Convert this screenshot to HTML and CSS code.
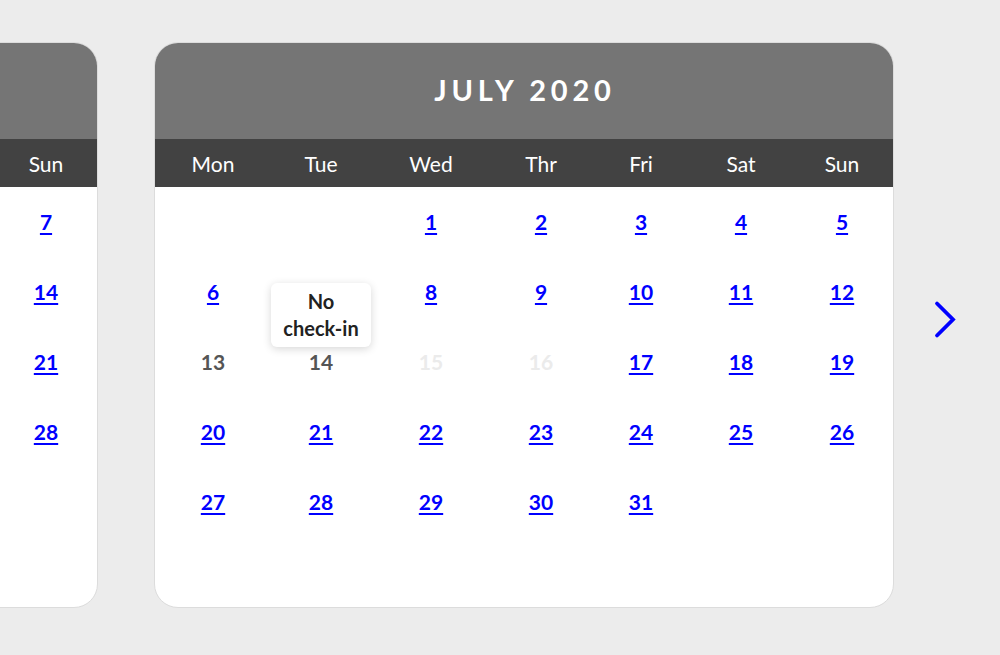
FILE: index.html
```html
<!DOCTYPE html>
<html lang="en">
<head>
<meta charset="utf-8">
<title>Calendar</title>
<link rel="stylesheet" href="styles.css">
</head>
<body>
<div class="stage">
  <section class="cal">
    <header class="cal-title">JUNE 2020</header>
    <div class="cal-weekdays">
      <span>Mon</span><span>Tue</span><span>Wed</span><span>Thr</span><span>Fri</span><span>Sat</span><span>Sun</span>
    </div>
    <div class="cal-days">
      <div class="day"><a href="#">1</a></div><div class="day"><a href="#">2</a></div><div class="day"><a href="#">3</a></div><div class="day"><a href="#">4</a></div><div class="day"><a href="#">5</a></div><div class="day"><a href="#">6</a></div><div class="day"><a href="#">7</a></div>
      <div class="day"><a href="#">8</a></div><div class="day"><a href="#">9</a></div><div class="day"><a href="#">10</a></div><div class="day"><a href="#">11</a></div><div class="day"><a href="#">12</a></div><div class="day"><a href="#">13</a></div><div class="day"><a href="#">14</a></div>
      <div class="day"><a href="#">15</a></div><div class="day"><a href="#">16</a></div><div class="day"><a href="#">17</a></div><div class="day"><a href="#">18</a></div><div class="day"><a href="#">19</a></div><div class="day"><a href="#">20</a></div><div class="day"><a href="#">21</a></div>
      <div class="day"><a href="#">22</a></div><div class="day"><a href="#">23</a></div><div class="day"><a href="#">24</a></div><div class="day"><a href="#">25</a></div><div class="day"><a href="#">26</a></div><div class="day"><a href="#">27</a></div><div class="day"><a href="#">28</a></div>
      <div class="day"><a href="#">29</a></div><div class="day"><a href="#">30</a></div>
    </div>
  </section>

  <section class="cal">
    <header class="cal-title">JULY 2020</header>
    <div class="cal-weekdays">
      <span>Mon</span><span>Tue</span><span>Wed</span><span>Thr</span><span>Fri</span><span>Sat</span><span>Sun</span>
    </div>
    <div class="cal-days">
      <div class="day"></div><div class="day"></div><div class="day"><a href="#">1</a></div><div class="day"><a href="#">2</a></div><div class="day"><a href="#">3</a></div><div class="day"><a href="#">4</a></div><div class="day"><a href="#">5</a></div>
      <div class="day"><a href="#">6</a></div><div class="day"><span class="tip">No<br>check-in</span></div><div class="day"><a href="#">8</a></div><div class="day"><a href="#">9</a></div><div class="day"><a href="#">10</a></div><div class="day"><a href="#">11</a></div><div class="day"><a href="#">12</a></div>
      <div class="day"><span class="blocked">13</span></div><div class="day"><span class="blocked">14</span></div><div class="day"><span class="past">15</span></div><div class="day"><span class="past">16</span></div><div class="day"><a href="#">17</a></div><div class="day"><a href="#">18</a></div><div class="day"><a href="#">19</a></div>
      <div class="day"><a href="#">20</a></div><div class="day"><a href="#">21</a></div><div class="day"><a href="#">22</a></div><div class="day"><a href="#">23</a></div><div class="day"><a href="#">24</a></div><div class="day"><a href="#">25</a></div><div class="day"><a href="#">26</a></div>
      <div class="day"><a href="#">27</a></div><div class="day"><a href="#">28</a></div><div class="day"><a href="#">29</a></div><div class="day"><a href="#">30</a></div><div class="day"><a href="#">31</a></div>
    </div>
  </section>

  <button class="next" type="button" aria-label="Next month">
    <svg width="24" height="40" viewBox="0 0 24 40" aria-hidden="true">
      <polyline points="4,3.5 20,19.5 4,35.5" fill="none" stroke="#0000ff" stroke-width="3.8" stroke-linecap="round" stroke-linejoin="miter"/>
    </svg>
  </button>
</div>
</body>
</html>
```

FILE: styles.css
```css
* { box-sizing: border-box; }

html, body {
  margin: 0;
  padding: 0;
  height: 100%;
  background: #ececec;
  overflow: hidden;
  font-family: Lato, "Open Sans", "DejaVu Sans", sans-serif;
}

.stage {
  display: flex;
  align-items: flex-start;
  gap: 56px;
  padding-top: 42px;
  margin-left: -642px;
}

.cal {
  flex: 0 0 740px;
  width: 740px;
  height: 566px;
  background: #ffffff;
  border: 1px solid #dcdcdc;
  border-radius: 24px;
  overflow: hidden;
}

.cal-title {
  height: 96px;
  background: #757575;
  color: #ffffff;
  font-weight: 700;
  font-size: 29px;
  letter-spacing: 4.8px;
  display: flex;
  align-items: center;
  justify-content: center;
  padding-left: 2px;
  padding-bottom: 4px;
}

.cal-weekdays,
.cal-days {
  display: grid;
  grid-template-columns: 116px 100px 120px 100px 100px 100px 102px;
}

.cal-weekdays {
  height: 48px;
  background: #424242;
  color: #ffffff;
  font-size: 21px;
}

.cal-weekdays span {
  display: flex;
  align-items: center;
  justify-content: center;
}

.cal-days {
  grid-auto-rows: 70px;
}

.day {
  position: relative;
  display: flex;
  align-items: center;
  justify-content: center;
  font-size: 21px;
  font-weight: 700;
  padding-bottom: 2px;
}

.day a {
  color: #0000ff;
  text-decoration: underline;
  text-decoration-thickness: 2px;
  text-underline-offset: 3px;
}

.blocked { color: #555555; }
.past { color: #ebebeb; }

.tip {
  position: absolute;
  left: 0;
  right: 0;
  top: 26px;
  height: 64px;
  background: #ffffff;
  border-radius: 6px;
  box-shadow: 0 2px 9px rgba(0, 0, 0, 0.16);
  color: #222222;
  font-size: 20px;
  font-weight: 700;
  line-height: 27px;
  text-align: center;
  padding-top: 5px;
  z-index: 2;
}

.next {
  flex: 0 0 auto;
  align-self: center;
  margin-left: -17px;
  margin-top: -10px;
  padding: 0;
  border: 0;
  background: none;
  width: 24px;
  height: 40px;
  cursor: pointer;
}

.next svg { display: block; }
```
